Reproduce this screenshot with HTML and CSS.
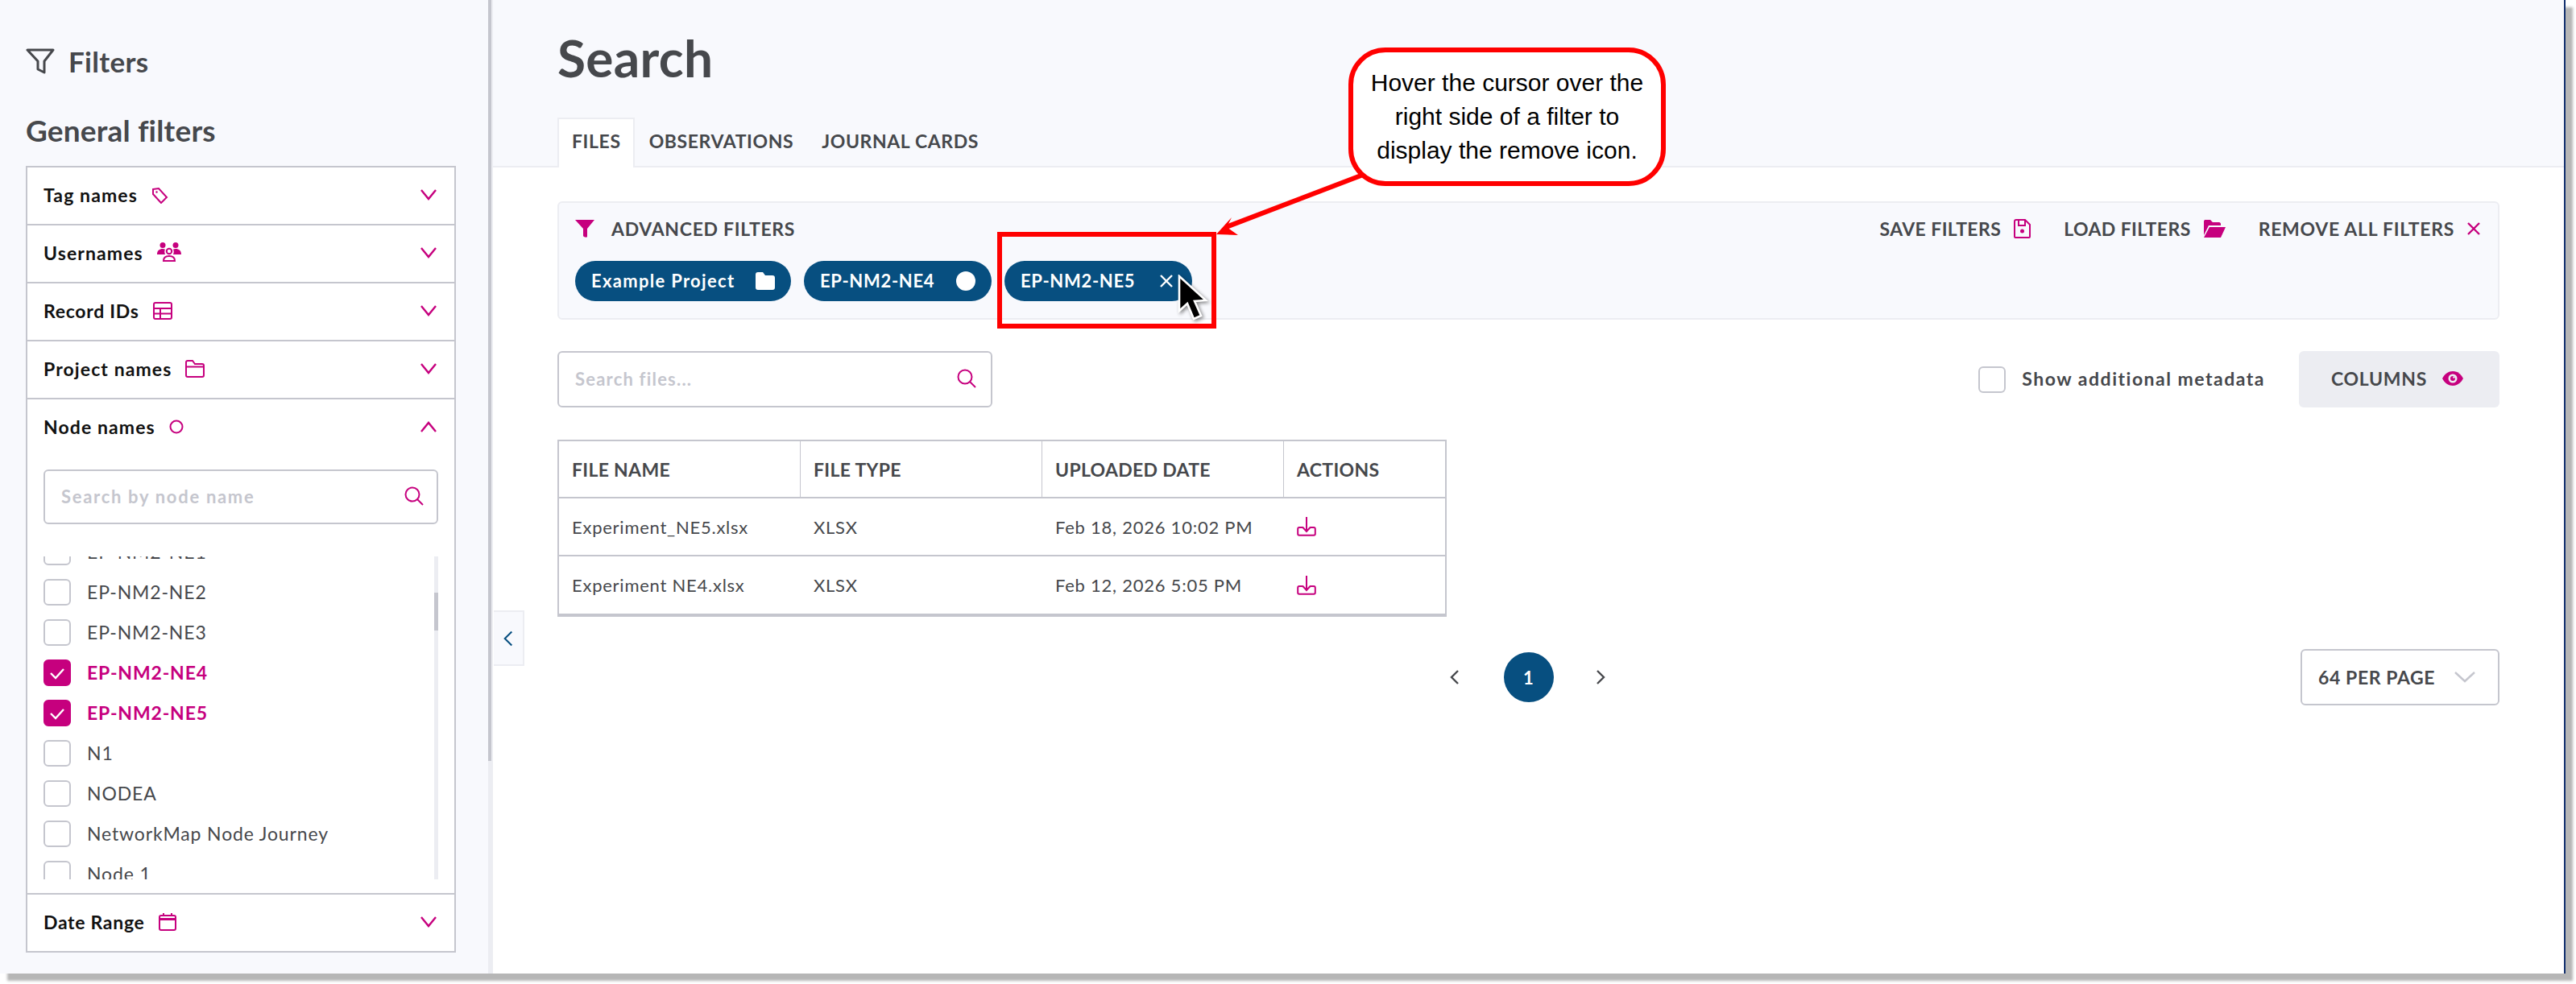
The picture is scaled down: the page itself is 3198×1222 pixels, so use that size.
FILE: index.html
```html
<!DOCTYPE html>
<html lang="en">
<head>
<meta charset="utf-8">
<title>Search</title>
<link rel="stylesheet" href="styles.css">
</head>
<body>
<div class="window">
  <aside class="sidebar">
    <div class="filters-title">
      <svg class="ic-filter" viewBox="0 0 36 32"><path d="M2 2H34L23 16V30L15 26V16Z"/></svg>
      <span>Filters</span>
    </div>
    <h2 class="general-title">General filters</h2>
    <div class="accordion">
      <div class="acc-row">
        <span class="acc-label">Tag names</span>
        <svg class="ic ic-21" viewBox="0 0 21 21"><path d="M2 3L9 2L19 13L12 20L2 9Z"/><circle class="solid" cx="6.5" cy="6.5" r="1.2"/></svg>
        <svg class="chev" viewBox="0 0 20 14"><path d="M1 1L10 12L19 1"/></svg>
      </div>
      <div class="acc-row">
        <span class="acc-label">Usernames</span>
        <svg class="ic ic-users" viewBox="0 0 30 24"><circle class="solid" cx="7" cy="3.5" r="3.5"/><circle class="solid" cx="23" cy="3.5" r="3.5"/><path class="solid" d="M0 15C0 10 3 8 7 8C8 8 9 8.300 10 8.800C9 10 9 13 10 15Z"/><path class="solid" d="M30 15C30 10 27 8 23 8C22 8 21 8.300 20 8.800C21 10 21 13 20 15Z"/><circle cx="15" cy="11" r="3.200"/><path d="M8 23C8 19 11 17 15 17C19 17 22 19 22 23Z"/></svg>
        <svg class="chev" viewBox="0 0 20 14"><path d="M1 1L10 12L19 1"/></svg>
      </div>
      <div class="acc-row">
        <span class="acc-label acc-label-tight">Record IDs</span>
        <svg class="ic ic-table" viewBox="0 0 24 22"><rect x="1" y="1" width="22" height="20" rx="2"/><path d="M1 8H23M1 14.500H23M9 8V21"/></svg>
        <svg class="chev" viewBox="0 0 20 14"><path d="M1 1L10 12L19 1"/></svg>
      </div>
      <div class="acc-row">
        <span class="acc-label">Project names</span>
        <svg class="ic ic-table" viewBox="0 0 24 22"><path d="M1 19V3C1 2 2 1 3 1H9L12 5H21C22 5 23 6 23 7V19C23 20 22 21 21 21H3C2 21 1 20 1 19ZM1 8.500H23"/></svg>
        <svg class="chev" viewBox="0 0 20 14"><path d="M1 1L10 12L19 1"/></svg>
      </div>
      <div class="acc-node">
        <div class="acc-row acc-row-open">
          <span class="acc-label">Node names</span>
          <svg class="ic ic-circle" viewBox="0 0 18 18"><circle cx="9" cy="9" r="7.500"/></svg>
          <svg class="chev" viewBox="0 0 20 14"><path d="M1 13L10 2L19 13"/></svg>
        </div>
        <div class="node-search">
          <span class="placeholder placeholder-node">Search by node name</span>
          <svg class="ic ic-search" viewBox="0 0 24 24"><circle cx="10" cy="10" r="8.500"/><path d="M16 16L23 23"/></svg>
        </div>
        <div class="node-list">
          <ul class="node-items">
            <li class="node-item"><span class="check"></span>EP-NM2-NE1</li>
            <li class="node-item"><span class="check"></span>EP-NM2-NE2</li>
            <li class="node-item"><span class="check"></span>EP-NM2-NE3</li>
            <li class="node-item node-on"><span class="check check-on"><svg viewBox="0 0 20 16"><path d="M2 8L8 14L18 3"/></svg></span>EP-NM2-NE4</li>
            <li class="node-item node-on"><span class="check check-on"><svg viewBox="0 0 20 16"><path d="M2 8L8 14L18 3"/></svg></span>EP-NM2-NE5</li>
            <li class="node-item"><span class="check"></span>N1</li>
            <li class="node-item"><span class="check"></span>NODEA</li>
            <li class="node-item"><span class="check"></span>NetworkMap Node Journey</li>
            <li class="node-item"><span class="check"></span>Node 1</li>
          </ul>
          <div class="list-track"><div class="list-thumb"></div></div>
        </div>
      </div>
      <div class="acc-row acc-row-last">
        <span class="acc-label acc-label-tight">Date Range</span>
        <svg class="ic ic-cal" viewBox="0 0 22 22"><rect x="1" y="3" width="20" height="18" rx="2"/><path d="M1 7.500H21" class="thick"/><path d="M6 0V3M16 0V3"/></svg>
        <svg class="chev" viewBox="0 0 20 14"><path d="M1 1L10 12L19 1"/></svg>
      </div>
    </div>
  </aside>

  <div class="side-track"><div class="side-thumb"></div></div>

  <button class="collapse"><svg viewBox="0 0 14 24"><path d="M12 2L2 12L12 22"/></svg></button>

  <main class="main">
    <header class="band">
      <h1 class="page-title">Search</h1>
      <nav class="tabs">
        <span class="tab tab-active">FILES</span>
        <span class="tab tab-mid">OBSERVATIONS</span>
        <span class="tab">JOURNAL CARDS</span>
      </nav>
    </header>

    <section class="content">
      <div class="panel">
        <div class="panel-top">
          <svg class="ic-funnel" viewBox="0 0 24 22"><path d="M0 0H24L15 11V21C15 22 11 22 10 20V11Z"/></svg>
          <span class="caps panel-title">ADVANCED FILTERS</span>
          <div class="panel-actions">
            <span class="action"><span class="caps caps-tight">SAVE FILTERS</span>
              <svg class="ic ic-save" viewBox="0 0 21 24"><path d="M1 22V3C1 2 2 1 3 1H14L20 7V22C20 22.500 19.500 23 19 23H2C1.500 23 1 22.500 1 22Z"/><path d="M6 1V8H14V1"/><circle class="solid" cx="10.500" cy="15" r="2.500"/></svg></span>
            <span class="action"><span class="caps caps-tight">LOAD FILTERS</span>
              <svg class="ic-load" viewBox="0 0 27 24"><path d="M0 3C0 1.500 1 1 2 1H8L11 4H19C20 4 21 5 21 6V8H6L0 20Z"/><path d="M7 10H27L21 23H0Z"/></svg></span>
            <span class="action"><span class="caps">REMOVE ALL FILTERS</span>
              <svg class="ic ic-x" viewBox="0 0 16 16"><path d="M1 1L15 15M15 1L1 15"/></svg></span>
          </div>
        </div>
        <div class="chips">
          <span class="chip chip-project">Example Project
            <svg class="chip-ic" viewBox="0 0 24 22"><path d="M0 3C0 1 1 0 3 0H9L12 4H21C23 4 24 5 24 7V19C24 21 23 22 21 22H3C1 22 0 21 0 19Z"/></svg></span>
          <span class="chip chip-node">EP-NM2-NE4
            <svg class="chip-ic" viewBox="0 0 24 24"><circle cx="12" cy="12" r="12"/></svg></span>
          <span class="chip chip-node">EP-NM2-NE5
            <svg class="chip-x" viewBox="0 0 16 16"><path d="M1 1L15 15M15 1L1 15"/></svg></span>
        </div>
      </div>

      <div class="search-row">
        <div class="file-search">
          <span class="placeholder">Search files...</span>
          <svg class="ic ic-search" viewBox="0 0 24 24"><circle cx="10" cy="10" r="8.500"/><path d="M16 16L23 23"/></svg>
        </div>
        <label class="meta"><span class="check"></span><span class="meta-text">Show additional metadata</span></label>
        <button class="columns"><span class="caps">COLUMNS</span>
          <svg class="ic-eye" viewBox="0 0 26 18"><path d="M0 9C3 3 8 0 13 0C18 0 23 3 26 9C23 15 18 18 13 18C8 18 3 15 0 9Z"/><circle class="eye-w" cx="13" cy="9" r="5.500"/><circle cx="13" cy="9" r="3"/><circle class="eye-w" cx="14.500" cy="7.500" r="1.300"/></svg></button>
      </div>

      <div class="table-wrap">
        <table class="files">
          <colgroup><col class="col-a"><col class="col-a"><col class="col-a"><col></colgroup>
          <thead>
            <tr><th>FILE NAME</th><th>FILE TYPE</th><th>UPLOADED DATE</th><th>ACTIONS</th></tr>
          </thead>
          <tbody>
            <tr><td>Experiment_NE5.xlsx</td><td>XLSX</td><td>Feb 18, 2026 10:02 PM</td>
              <td><svg class="ic ic-dl" viewBox="0 0 24 24"><path d="M12 0V18M7 12.500L12 18L17 12.500"/><path d="M7 13H3C2 13 1.200 13.800 1.200 15V21C1.200 22 2 22.800 3 22.800H21C22 22.800 22.800 22 22.800 21V15C22.800 13.800 22 13 21 13H17"/></svg></td></tr>
            <tr><td>Experiment NE4.xlsx</td><td>XLSX</td><td>Feb 12, 2026 5:05 PM</td>
              <td><svg class="ic ic-dl" viewBox="0 0 24 24"><path d="M12 0V18M7 12.500L12 18L17 12.500"/><path d="M7 13H3C2 13 1.200 13.800 1.200 15V21C1.200 22 2 22.800 3 22.800H21C22 22.800 22.800 22 22.800 21V15C22.800 13.800 22 13 21 13H17"/></svg></td></tr>
          </tbody>
        </table>
      </div>

      <div class="pager-row">
        <div class="pager">
          <svg class="pg-chev" viewBox="0 0 12 20"><path d="M10 2L2 10L10 18"/></svg>
          <span class="page-num">1</span>
          <svg class="pg-chev pg-next" viewBox="0 0 12 20"><path d="M2 2L10 10L2 18"/></svg>
        </div>
        <div class="per-page">
          <span class="per-text">64 PER PAGE</span>
          <svg class="per-chev" viewBox="0 0 26 14"><path d="M1 1L13 12L25 1"/></svg>
        </div>
      </div>
    </section>
  </main>
</div>

<svg class="annot" viewBox="0 0 3198 1222">
  <rect class="annot-box" x="1241" y="291" width="266" height="114"/>
  <path class="annot-line" d="M1700 214L1522 282"/>
  <path class="annot-head" d="M1510 291L1529 270L1523 282L1537 292Z"/>
</svg>
<svg class="cursor" viewBox="0 0 38 58"><path d="M2 2V45L12 36L20 55L29 51L21 33L35 32Z"/></svg>
<div class="callout">Hover the cursor over the<br>right side of a filter to<br>display the remove icon.</div>
</body>
</html>
```

FILE: styles.css
```css
* { box-sizing: border-box; }
html, body { margin: 0; padding: 0; background: #fff; }
body {
  width: 3198px;
  height: 1222px;
  position: relative;
  overflow: hidden;
  font-family: Lato, "Open Sans", sans-serif;
  color: #46484c;
}

.window {
  display: flex;
  width: 3185px;
  height: 1209px;
  position: relative;
  background: #fff;
  border-right: 2px solid #12306e;
  box-shadow: 9px 9px 3px #b6b6b6;
}

/* sidebar */
.sidebar {
  width: 606px;
  flex: none;
  background: #f8f9fd;
  padding: 58px 40px 0 32px;
}
.filters-title {
  display: flex;
  align-items: center;
  gap: 17px;
  font-size: 35px;
  font-weight: 700;
  line-height: 36px;
  letter-spacing: .3px;
}
.ic-filter { width: 36px; height: 32px; fill: none; stroke: #46484c; stroke-width: 3; stroke-linejoin: round; }
.general-title {
  margin: 48px 0 0;
  font-size: 37px;
  line-height: 40px;
  font-weight: 700;
  letter-spacing: .2px;
}
.accordion {
  margin-top: 24px;
  width: 534px;
  border: 2px solid #c5c6ce;
  background: #fff;
}
.acc-row {
  height: 72px;
  display: flex;
  align-items: center;
  padding: 0 22px 2px 20px;
  border-bottom: 2px solid #c5c6ce;
}
.acc-row-open { border-bottom: 0; height: 70px; }
.acc-row-last { border-bottom: 0; height: 70px; }
.acc-label { font-size: 23px; font-weight: 700; color: #111; margin-right: 17px; letter-spacing: 1.1px; }
.acc-label-tight { letter-spacing: .7px; }
.chev { width: 20px; height: 14px; margin-left: auto; fill: none; stroke: #c6007e; stroke-width: 2.4; flex: none; }

.ic { fill: none; stroke: #c6007e; stroke-width: 2; flex: none; }
.ic .solid { fill: #c6007e; stroke: none; }
.ic .thick { stroke-width: 3; }
.ic-21 { width: 21px; height: 21px; }
.ic-users { width: 30px; height: 24px; margin-top: -2px; }
.ic-table { width: 24px; height: 22px; }
.ic-circle { width: 18px; height: 18px; }
.ic-cal { width: 22px; height: 22px; }
.ic-search { width: 24px; height: 24px; margin-left: auto; flex: none; }

.acc-node { border-bottom: 2px solid #c5c6ce; padding-bottom: 17px; }
.node-search {
  margin: 17px 20px 0;
  height: 68px;
  border: 2px solid #c5c6ce;
  border-radius: 6px;
  display: flex;
  align-items: center;
  padding: 0 16px 2px 20px;
}
.placeholder { font-size: 22px; font-weight: 700; color: #c5c6ce; letter-spacing: 1.2px; }
.placeholder-node { letter-spacing: 1.7px; }
.node-list {
  margin: 40px 20px 0;
  height: 401px;
  overflow: hidden;
  display: flex;
  justify-content: space-between;
}
.node-items { list-style: none; margin: -22px 0 0; padding: 0; }
.node-item {
  height: 50px;
  display: flex;
  align-items: flex-start;
  gap: 20px;
  font-size: 23px;
  line-height: 32px;
  letter-spacing: .85px;
}
.node-on { color: #c6007e; font-weight: 700; }
.check {
  width: 34px;
  height: 33px;
  flex: none;
  border: 2px solid #c5c6ce;
  border-radius: 6px;
  background: #fff;
  display: block;
}
.check-on { background: #c6007e; border-color: #c6007e; display: flex; align-items: center; justify-content: center; }
.check-on svg { width: 20px; height: 16px; fill: none; stroke: #fff; stroke-width: 2.4; }
.list-track { width: 5px; height: 100%; background: #ecedf2; }
.list-thumb { margin-top: 45px; height: 47px; background: #c5c6ce; }

.side-track { width: 6px; flex: none; background: #ecedf2; }
.side-thumb { width: 4px; height: 945px; background: #c5c6ce; }

.collapse {
  position: absolute;
  left: 613px;
  top: 758px;
  width: 38px;
  height: 69px;
  padding: 0;
  background: #f8f9fd;
  border: 2px solid #ecedf2;
  border-left: 0;
  display: flex;
  align-items: center;
  justify-content: center;
}
.collapse svg { width: 12px; height: 22px; fill: none; stroke: #074f80; stroke-width: 2.4; }

/* main */
.main { flex: 1; min-width: 0; display: flex; flex-direction: column; }
.band {
  height: 208px;
  background: #f8f9fd;
  border-bottom: 2px solid #ecedf2;
  padding: 36px 0 0 80px;
}
.page-title {
  margin: 0;
  font-size: 64px;
  line-height: 72px;
  font-weight: 700;
  letter-spacing: .3px;
}
.tabs { display: flex; margin-top: 38px; }
.tab {
  height: 62px;
  line-height: 54px;
  padding: 0 17px 0 16px;
  font-size: 23px;
  font-weight: 700;
  letter-spacing: .6px;
  border: 2px solid transparent;
  border-bottom: 0;
}
.tab-active { background: #fff; border-color: #ecedf2; padding-right: 15px; }
.tab-mid { padding-right: 15px; }

.content { padding: 42px 80px 0 80px; }
.caps { font-size: 23px; font-weight: 700; letter-spacing: .7px; white-space: nowrap; }
.caps-tight { letter-spacing: .4px; }
.panel {
  height: 147px;
  background: #f8f9fd;
  border: 2px solid #ecedf2;
  border-radius: 6px;
  padding: 20px 22px 0 20px;
}
.panel-top { display: flex; align-items: center; height: 24px; }
.ic-funnel { width: 24px; height: 22px; fill: #c6007e; margin-right: 21px; flex: none; }
.panel-actions { margin-left: auto; display: flex; gap: 41px; }
.action { display: flex; align-items: center; gap: 16px; }
.ic-save { width: 21px; height: 24px; }
.ic-load { width: 27px; height: 24px; fill: #c6007e; flex: none; }
.ic-x { width: 16px; height: 16px; stroke-width: 2.4; }
.chips { display: flex; gap: 16px; margin-top: 28px; }
.chip {
  height: 50px;
  border-radius: 25px;
  background: #074f80;
  color: #fff;
  font-size: 22px;
  font-weight: 700;
  letter-spacing: .7px;
  display: flex;
  align-items: center;
  justify-content: space-between;
  padding: 0 20px 1px;
  white-space: nowrap;
}
.chip-project { width: 268px; letter-spacing: 1.3px; }
.chip-node { width: 233px; }
.chip-ic { width: 24px; height: 24px; fill: #fff; flex: none; }
.chip-x { width: 16px; height: 16px; fill: none; stroke: #fff; stroke-width: 2.4; margin-right: 4px; flex: none; }

.search-row { display: flex; align-items: center; margin-top: 39px; height: 70px; }
.file-search {
  width: 540px;
  height: 70px;
  border: 2px solid #c5c6ce;
  border-radius: 6px;
  display: flex;
  align-items: center;
  padding: 0 18px 2px 20px;
}
.meta { margin-left: auto; display: flex; align-items: center; gap: 20px; }
.meta-text { font-size: 23px; font-weight: 700; letter-spacing: 1.5px; margin-top: -2px; }
.columns {
  margin-left: 42px;
  width: 249px;
  height: 70px;
  background: #ecedf2;
  border: 0;
  border-radius: 6px;
  color: #46484c;
  font-family: inherit;
  display: flex;
  align-items: center;
  gap: 19px;
  padding: 0 0 2px 40px;
}
.ic-eye { width: 26px; height: 18px; fill: #c6007e; }
.ic-eye .eye-w { fill: #ecedf2; }

.table-wrap {
  margin-top: 40px;
  width: 1104px;
  border: 2px solid #c5c6ce;
  border-bottom-width: 4px;
}
.files { border-collapse: separate; border-spacing: 0; table-layout: fixed; width: 100%; }
.col-a { width: 300px; }
.files th {
  height: 71px;
  text-align: left;
  padding: 0 0 0 16px;
  font-size: 23px;
  font-weight: 700;
  letter-spacing: .3px;
  border-right: 1px solid #c5c6ce;
  border-bottom: 2px solid #c5c6ce;
}
.files th:last-child { border-right: 0; }
.files td {
  height: 72px;
  padding: 0 0 0 16px;
  font-size: 22px;
  letter-spacing: .75px;
  border-bottom: 2px solid #c5c6ce;
}
.files tr:last-child td { border-bottom: 0; height: 71px; }
.ic-dl { width: 24px; height: 24px; display: block; }

.pager-row { display: grid; grid-template-columns: 1fr auto 1fr; align-items: center; margin-top: 40px; }
.pager { grid-column: 2; display: flex; align-items: center; gap: 55px; }
.pg-chev { width: 12px; height: 20px; fill: none; stroke: #46484c; stroke-width: 2.4; }
.pg-next { margin-left: -3px; margin-right: 3px; }
.page-num {
  width: 62px;
  height: 62px;
  border-radius: 50%;
  background: #074f80;
  color: #fff;
  font-size: 22px;
  font-weight: 700;
  display: flex;
  align-items: center;
  justify-content: center;
}
.per-page {
  grid-column: 3;
  justify-self: end;
  width: 247px;
  height: 70px;
  border: 2px solid #c5c6ce;
  border-radius: 6px;
  display: flex;
  align-items: center;
  padding: 0 28px 0 20px;
  justify-content: space-between;
}
.per-text { font-size: 23px; font-weight: 700; letter-spacing: .6px; }
.per-chev { width: 26px; height: 14px; fill: none; stroke: #c5c6ce; stroke-width: 2.4; }

/* annotation layer */
.annot { position: absolute; left: 0; top: 0; width: 3198px; height: 1222px; pointer-events: none; }
.annot-box { fill: none; stroke: #ff0000; stroke-width: 6; }
.annot-line { fill: none; stroke: #ff0000; stroke-width: 6; }
.annot-head { fill: #ff0000; }
.cursor {
  position: absolute;
  left: 1462px;
  top: 341px;
  width: 38px;
  height: 58px;
  fill: #000;
  stroke: #fff;
  stroke-width: 2.6;
  filter: drop-shadow(2px 2px 2px rgba(0,0,0,.45));
}
.callout {
  position: absolute;
  left: 1674px;
  top: 59px;
  width: 394px;
  height: 172px;
  background: #fff;
  border: 6px solid #ff0000;
  border-radius: 46px;
  color: #000;
  font-family: "Liberation Sans", Arial, sans-serif;
  font-size: 30px;
  line-height: 42px;
  text-align: center;
  display: flex;
  align-items: center;
  justify-content: center;
}
```
